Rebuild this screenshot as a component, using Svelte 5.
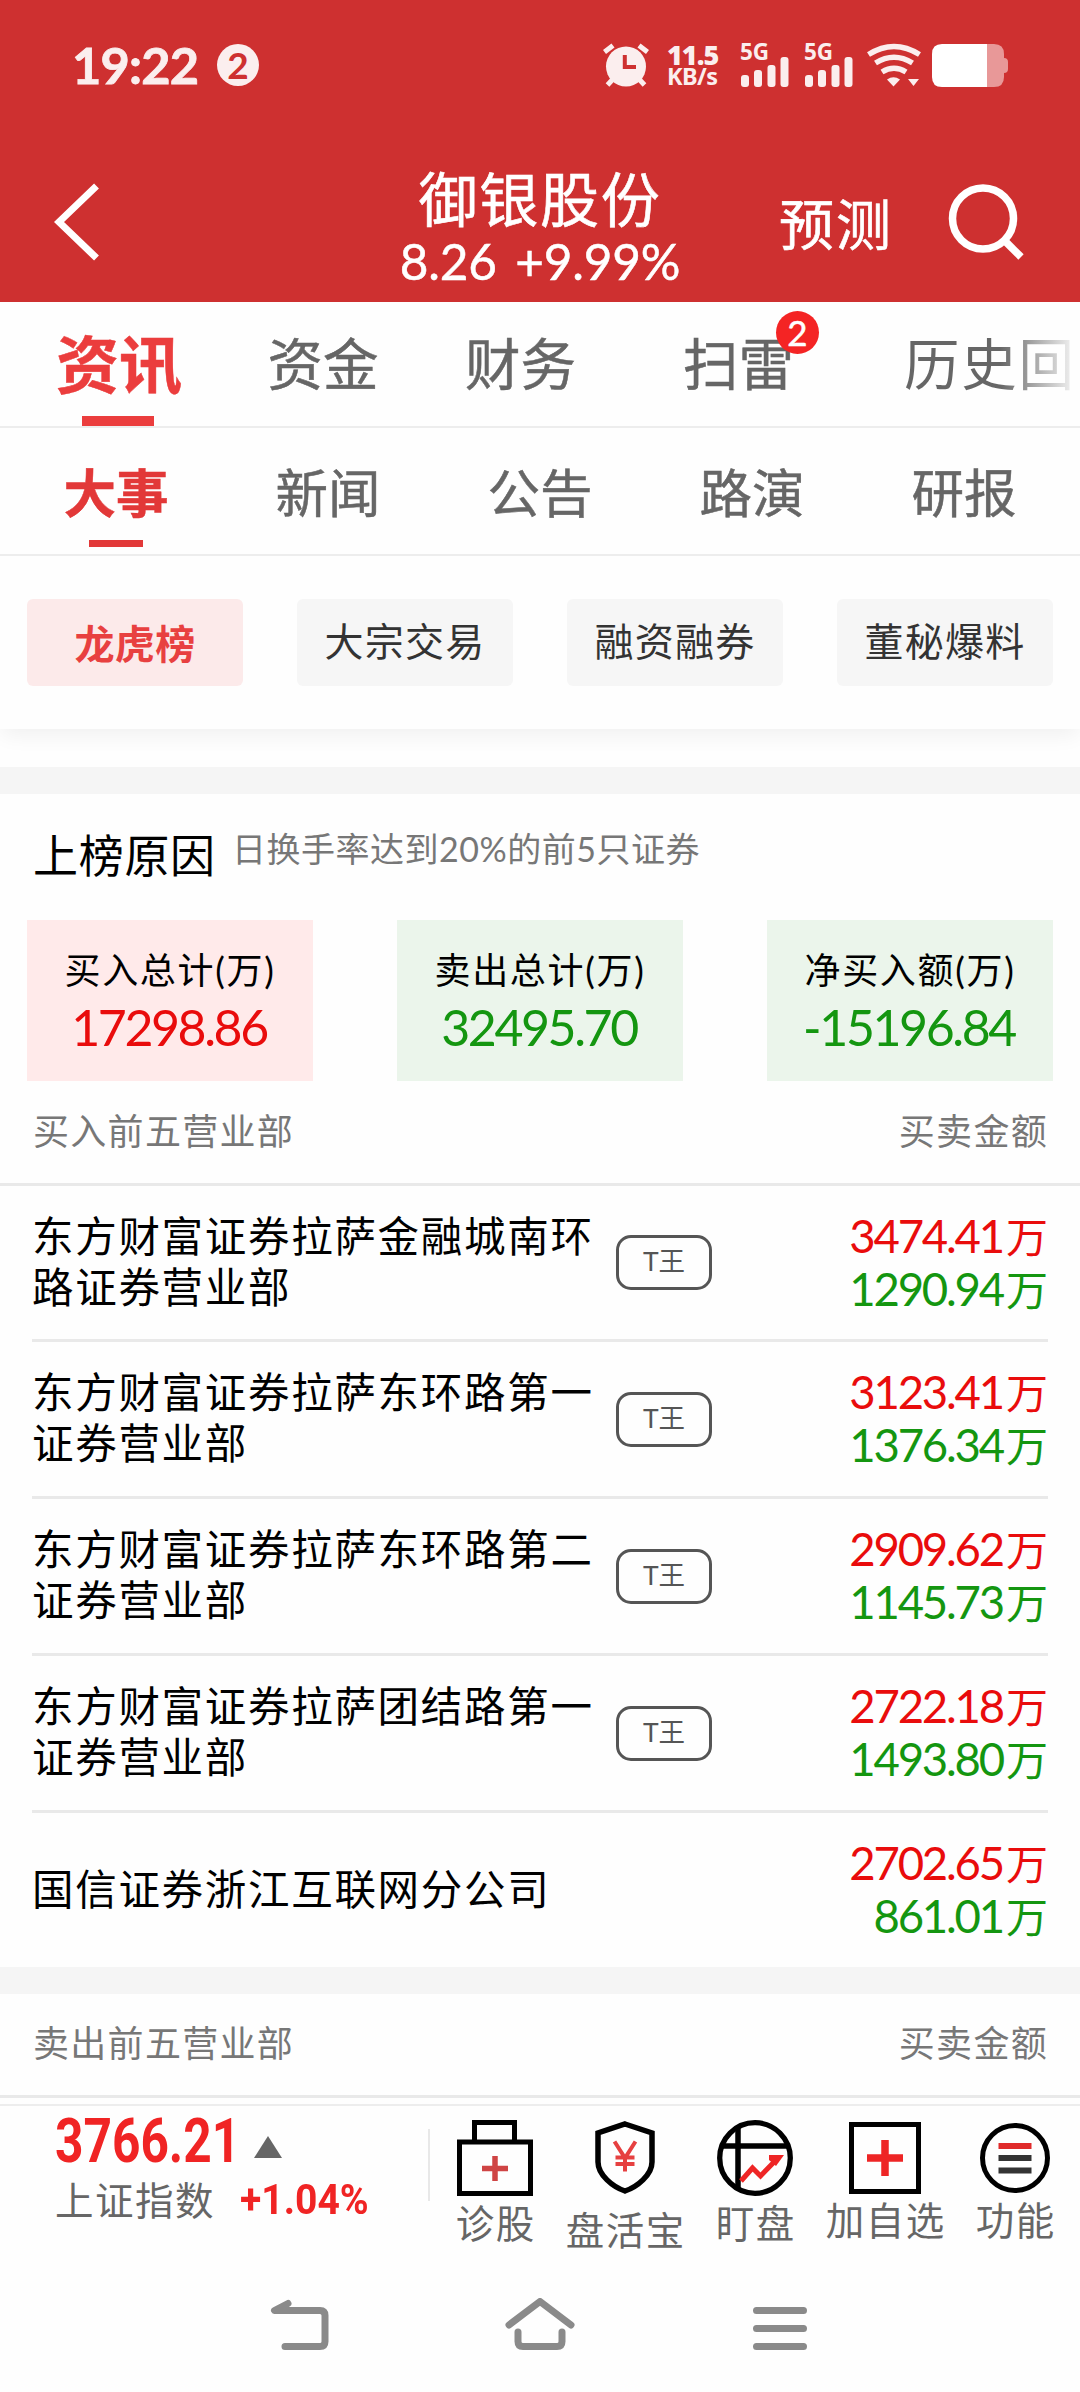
<script lang="ts">
	type Branch = { name: string; tag?: string; buy: string; sell: string };

	let activeTab = $state('资讯');
	let activeSub = $state('大事');
	let activeChip = $state('龙虎榜');

	const tabs: { label: string; badge?: number }[] = [
		{ label: '资讯' },
		{ label: '资金' },
		{ label: '财务' },
		{ label: '扫雷', badge: 2 },
		{ label: '历史回' }
	];
	const subTabs = ['大事', '新闻', '公告', '路演', '研报'];
	const chips = ['龙虎榜', '大宗交易', '融资融券', '董秘爆料'];

	const totals = [
		{ label: '买入总计(万)', value: '17298.86', up: true },
		{ label: '卖出总计(万)', value: '32495.70', up: false },
		{ label: '净买入额(万)', value: '-15196.84', up: false }
	];

	const branches: Branch[] = [
		{ name: '东方财富证券拉萨金融城南环路证券营业部', tag: 'T王', buy: '3474.41', sell: '1290.94' },
		{ name: '东方财富证券拉萨东环路第一证券营业部', tag: 'T王', buy: '3123.41', sell: '1376.34' },
		{ name: '东方财富证券拉萨东环路第二证券营业部', tag: 'T王', buy: '2909.62', sell: '1145.73' },
		{ name: '东方财富证券拉萨团结路第一证券营业部', tag: 'T王', buy: '2722.18', sell: '1493.80' },
		{ name: '国信证券浙江互联网分公司', buy: '2702.65', sell: '861.01' }
	];
</script>

{#snippet signal()}
	<div class="signal">
		<span>5G</span>
		<svg width="50" height="30" viewBox="0 0 50 30" fill="#fbeeee">
			<rect x="1" y="18" width="8" height="12" rx="3" />
			<rect x="14" y="13" width="8" height="17" rx="3" />
			<rect x="27.500" y="8" width="8" height="22" rx="3" />
			<rect x="40.500" y="0" width="8" height="30" rx="3" />
		</svg>
	</div>
{/snippet}

<div class="page">
	<header>
		<div class="status">
			<span class="time">19:22</span>
			<span class="count">2</span>
			<div class="status-icons">
				<svg class="alarm" width="46" height="44" viewBox="0 0 46 44">
					<g stroke="#fbeeee" stroke-width="5">
						<path d="M1.500 9 L10 2.500 M36 2.500 L44.500 9 M4.500 42 L11 35 M41.500 42 L35 35" />
					</g>
					<circle cx="23" cy="23.500" r="20" fill="#fbeeee" />
					<path d="M21.800 12 V24 H33" fill="none" stroke="#ce3030" stroke-width="4" />
				</svg>
				<div class="speed"><b>11.5</b><i>KB/s</i></div>
				{@render signal()}
				{@render signal()}
				<svg class="wifi" width="54" height="44" viewBox="0 0 54 44">
					<g fill="none" stroke="#fbeeee" stroke-width="5.500">
						<path d="M1.500 11.500 Q27 -4.500 52.500 11.500" />
						<path d="M8.500 20 Q27 8.500 45.500 20" />
						<path d="M15 29 Q27 21.500 39 29" />
					</g>
					<path d="M20 36.500 Q26.500 32 33 36.500 L26.500 43.500 Z" fill="#fbeeee" />
					<path d="M41 36 H52 L46.500 43 Z" fill="#fbeeee" />
				</svg>
				<svg class="battery" width="76" height="43" viewBox="0 0 76 43">
					<path d="M54 0 H62 Q72 0 72 10 V14 Q76 14 76 18 V25 Q76 29 72 29 V33 Q72 43 62 43 H54 Z" fill="#e89898" />
					<path d="M10 0 H55 V43 H10 Q0 43 0 33 V10 Q0 0 10 0 Z" fill="#fff" />
				</svg>
			</div>
		</div>
		<div class="title-bar">
			<svg class="back" width="46" height="78" viewBox="0 0 46 78">
				<path d="M42.500 3 L5 39 L42.500 75" fill="none" stroke="#fff" stroke-width="7" />
			</svg>
			<div class="stock">
				<h1>御银股份</h1>
				<p>8.26 +9.99%</p>
			</div>
			<span class="predict">预测</span>
			<svg class="search" width="78" height="78" viewBox="0 0 78 78" fill="none" stroke="#fff">
				<circle cx="36" cy="36.500" r="30.500" stroke-width="7.500" />
				<path d="M57 58 L74 75" stroke-width="7.500" />
			</svg>
		</div>
	</header>

	<nav class="tabs">
		{#each tabs as tab}
			<button class:active={activeTab === tab.label} onclick={() => (activeTab = tab.label)}>
				<span class="label">
					{tab.label}
					{#if tab.badge}<em>{tab.badge}</em>{/if}
				</span>
			</button>
		{/each}
	</nav>

	<nav class="sub-tabs">
		{#each subTabs as tab}
			<button class:active={activeSub === tab} onclick={() => (activeSub = tab)}>{tab}</button>
		{/each}
	</nav>

	<div class="chips">
		{#each chips as chip}
			<button class:active={activeChip === chip} onclick={() => (activeChip = chip)}>{chip}</button>
		{/each}
	</div>

	<div class="band first"></div>

	<section>
		<div class="reason">
			<h2>上榜原因</h2>
			<p>日换手率达到20%的前5只证券</p>
		</div>
		<div class="totals">
			{#each totals as total}
				<div class="total" class:up={total.up}>
					<span>{total.label}</span>
					<strong>{total.value}</strong>
				</div>
			{/each}
		</div>
		<div class="list-head buy"><span>买入前五营业部</span><span>买卖金额</span></div>
		<ul>
			{#each branches as branch}
				<li>
					<span class="name">{branch.name}</span>
					{#if branch.tag}<span class="tag">{branch.tag}</span>{/if}
					<span class="amounts">
						<span class="red">{branch.buy}<i>万</i></span>
						<span class="green">{branch.sell}<i>万</i></span>
					</span>
				</li>
			{/each}
		</ul>
	</section>

	<div class="band"></div>
	<div class="list-head sell"><span>卖出前五营业部</span><span>买卖金额</span></div>

	<footer>
		<div class="index">
			<div class="index-top">
				<span class="points"><b>3766.21</b></span>
				<svg width="28" height="22" viewBox="0 0 28 22"><path d="M14 0 L28 22 H0 Z" fill="#666" /></svg>
			</div>
			<div class="index-bottom">
				<span>上证指数</span>
				<span class="change"><b>+1.04%</b></span>
			</div>
		</div>
		<div class="divider"></div>
		<div class="actions">
			<div class="action">
				<svg width="76" height="76" viewBox="0 0 76 76" fill="none">
					<path d="M17.500 20 V2.500 H57.500 V20" stroke="#000" stroke-width="5" />
					<rect x="2.500" y="22" width="71" height="51.500" stroke="#000" stroke-width="5" />
					<path d="M38 36 V61 M25 48.500 H51" stroke="#cf4444" stroke-width="5.500" />
				</svg>
				<span>诊股</span>
			</div>
			<div class="action shield">
				<svg width="60" height="74" viewBox="0 0 60 74" fill="none">
					<path
						d="M30 4 L57 13 V42 C57 55 42 67 30 71 C18 67 3 55 3 42 V13 Z"
						stroke="#000"
						stroke-width="5.500"
					/>
					<path
						d="M19.500 21.500 L30 38 L40.500 21.500 M30 37 V51.500 M20.500 37.500 H39.500 M20.500 44 H39.500"
						stroke="#e64040"
						stroke-width="4"
					/>
				</svg>
				<span>盘活宝</span>
			</div>
			<div class="action">
				<svg width="76" height="76" viewBox="0 0 76 76" fill="none">
					<circle cx="38" cy="38" r="35.300" stroke="#000" stroke-width="5.300" />
					<path d="M21 7 V69 M6 26 H70" stroke="#000" stroke-width="5.500" />
					<path d="M24 61 L35.500 48 L43.500 56 L60 39" stroke="#ee2525" stroke-width="5" />
					<path d="M52 35 H67 L59 46 L52 40 Z" fill="#ee2525" />
				</svg>
				<span>盯盘</span>
			</div>
			<div class="action high">
				<svg width="72" height="72" viewBox="0 0 72 72" fill="none">
					<rect x="2.500" y="2.500" width="67" height="67" stroke="#000" stroke-width="5" />
					<path d="M36 18 V54 M18 36 H54" stroke="#ee2525" stroke-width="7.500" />
				</svg>
				<span>加自选</span>
			</div>
			<div class="action high">
				<svg width="72" height="72" viewBox="0 0 72 72" fill="none">
					<circle cx="36" cy="36" r="32.500" stroke="#000" stroke-width="5" />
					<path d="M19.500 24 H52.500" stroke="#e02a2a" stroke-width="6" />
					<path d="M19.500 36 H52.500 M19.500 48.500 H52.500" stroke="#333" stroke-width="6" />
				</svg>
				<span>功能</span>
			</div>
		</div>
	</footer>

	<div class="system-nav">
		<svg width="60" height="54" viewBox="0 0 60 54">
			<path d="M18 5.500 L4.500 12.500 H50 Q55 12.500 55 17.500 V43.500 Q55 48.500 50 48.500 H15" />
		</svg>
		<svg width="70" height="54" viewBox="0 0 70 54">
			<path d="M4 27 L35 3.500 L66 27 M13 34 V43.500 Q13 48.500 18 48.500 H52 Q57 48.500 57 43.500 V34" />
		</svg>
		<svg width="60" height="54" viewBox="0 0 60 54">
			<path d="M6.500 12.500 H53.500 M6.500 30.500 H53.500 M6.500 48.500 H53.500" />
		</svg>
	</div>
</div>

<style>
	:global(body) {
		margin: 0;
		background: #fefefe;
	}

	.page {
		width: 1080px;
		height: 2392px;
		overflow: hidden;
		background: #fefefe;
		font-family: Lato, 'Noto Sans CJK SC', sans-serif;
		color: #000;
	}

	h1,
	h2,
	p,
	ul {
		margin: 0;
		padding: 0;
		font-weight: 400;
	}

	button {
		padding: 0;
		border: none;
		background: none;
		font: inherit;
		color: inherit;
	}

	i,
	em {
		font-style: normal;
	}

	svg {
		display: block;
		flex: none;
	}

	header {
		height: 302px;
		background: #ce3030;
		color: #fff;
	}

	/* status bar */
	.status {
		display: flex;
		align-items: center;
		height: 130px;
		padding: 0 72px 0 72px;
		color: #fbeeee;
	}

	.time {
		width: 145px;
		font-size: 50.500px;
		font-weight: 700;
		line-height: 60px;
		letter-spacing: -0.8px;
		-webkit-text-stroke: 0.8px;
	}

	.count {
		width: 42px;
		height: 42px;
		border-radius: 50%;
		background: #fbeeee;
		color: #ce3030;
		font-size: 37px;
		font-weight: 700;
		line-height: 42px;
		text-align: center;
	}

	.status-icons {
		display: flex;
		align-items: center;
		height: 44px;
		margin-left: auto;
	}

	.speed {
		display: flex;
		flex-direction: column;
		width: 52px;
		margin: 0 21px 0 18px;
		font-family: 'Noto Sans', sans-serif;
		font-weight: 700;
	}

	.speed b {
		font-size: 27px;
		line-height: 23px;
		letter-spacing: -1px;
	}

	.speed i {
		font-size: 23.500px;
		line-height: 21px;
		letter-spacing: -0.6px;
	}

	.signal {
		display: flex;
		flex-direction: column;
		justify-content: space-between;
		width: 50px;
		height: 43px;
		margin-right: 14px;
	}

	.signal span {
		height: 13px;
		font-family: 'Noto Sans', sans-serif;
		font-size: 22.500px;
		font-weight: 700;
		line-height: 15px;
	}

	.wifi {
		margin: 0 11px 0 -1px;
	}

	.title-bar {
		display: grid;
		grid-template-columns: 54px 286px 400px 39px 168px 1fr;
		height: 172px;
	}

	.back {
		grid-column: 2;
		margin-top: 53px;
	}

	.stock {
		grid-column: 3;
		padding-top: 32px;
		text-align: center;
	}

	.stock h1 {
		font-size: 59px;
		line-height: 76px;
		letter-spacing: 1.800px;
		-webkit-text-stroke: 0.6px;
	}

	.stock p {
		font-size: 49.500px;
		line-height: 46px;
		letter-spacing: -0.2px;
		word-spacing: 6px;
		-webkit-text-stroke: 0.5px;
	}

	.predict {
		grid-column: 5;
		margin-top: 58px;
		font-size: 55px;
		line-height: 72px;
		letter-spacing: 2px;
		-webkit-text-stroke: 0.6px;
	}

	.search {
		grid-column: 6;
		margin-top: 52px;
	}

	/* primary and secondary tabs */
	.tabs {
		display: grid;
		grid-template-columns: 204px 204px 191px 245px 1fr;
		height: 124px;
		padding-left: 17px;
		border-bottom: 2px solid #ededed;
		color: #666;
		font-size: 55.500px;
		letter-spacing: 1px;
	}

	.tabs button {
		display: flex;
		flex-direction: column;
		align-items: center;
		justify-content: space-between;
		white-space: nowrap;
		-webkit-text-stroke: 0.5px;
	}

	.tabs button:last-child {
		align-items: flex-start;
		padding-left: 43px;
	}

	.label {
		position: relative;
		padding-top: 22px;
		line-height: 80px;
	}

	/* the last tab runs out of the row and fades away */
	.tabs button:last-child .label {
		background: linear-gradient(90deg, #666 96px, #fefefe 176px);
		background-clip: text;
		color: transparent;
		letter-spacing: 1.800px;
		-webkit-text-stroke: 0;
	}

	.tabs .active {
		color: #eb3d3d;
		font-size: 63px;
		font-weight: 700;
		letter-spacing: 0;
	}

	.tabs .active::after {
		content: '';
		width: 72px;
		height: 10px;
		margin-right: 3px;
		background: #eb3d3d;
	}

	.label em {
		position: absolute;
		top: 9px;
		right: -25px;
		width: 43px;
		height: 43px;
		border-radius: 50%;
		background: #f42424;
		color: #fff;
		font-size: 35px;
		line-height: 43px;
		letter-spacing: 0;
		text-align: center;
	}

	.sub-tabs {
		display: grid;
		grid-template-columns: repeat(5, 212px);
		height: 126px;
		padding: 0 10px;
		border-bottom: 2px solid #ededed;
		color: #666;
		font-size: 52.500px;
		letter-spacing: 1px;
	}

	.sub-tabs button {
		display: flex;
		flex-direction: column;
		align-items: center;
		justify-content: space-between;
		padding: 28px 0 7px;
		line-height: 74px;
		-webkit-text-stroke: 0.5px;
	}

	.sub-tabs .active {
		color: #e23838;
		font-weight: 700;
	}

	.sub-tabs .active::after {
		content: '';
		width: 54px;
		height: 7px;
		background: #e23838;
	}

	.chips {
		display: grid;
		grid-template-columns: repeat(4, 216px);
		gap: 54px;
		height: 87px;
		padding: 43px 27px;
		box-shadow: 0 8px 20px -2px rgba(0, 0, 0, 0.06);
		clip-path: inset(0 0 -40px 0);
	}

	.chips button {
		padding-bottom: 7px;
		border-radius: 6px;
		background: #f6f6f6;
		color: #333;
		font-size: 39px;
		letter-spacing: 1.300px;
	}

	.chips .active {
		padding-bottom: 2px;
		background: #fceaea;
		color: #e84040;
		font-size: 40px;
		font-weight: 700;
		letter-spacing: 0.3px;
	}

	.band {
		height: 27px;
		background: #f5f5f5;
	}

	.band.first {
		margin-top: 38px;
	}

	/* list reason and totals */
	.reason {
		display: flex;
		height: 126px;
		padding-left: 33px;
	}

	.reason h2 {
		width: 199px;
		padding-top: 28px;
		font-size: 45px;
		line-height: 68px;
		letter-spacing: 0.700px;
	}

	.reason p {
		padding-top: 31px;
		color: #777;
		font-size: 34px;
		line-height: 48px;
		letter-spacing: 0.5px;
	}

	.totals {
		display: flex;
		gap: 84px;
		padding: 0 27px;
	}

	.total {
		display: flex;
		flex-direction: column;
		align-items: center;
		width: 286px;
		height: 136px;
		padding-top: 25px;
		background: #ebf5eb;
	}

	.total span {
		font-size: 36px;
		line-height: 50px;
		letter-spacing: 1.700px;
	}

	.total strong {
		margin-right: 2px;
		color: #149610;
		font-size: 50px;
		font-weight: 400;
		line-height: 64px;
		letter-spacing: -2.400px;
	}

	.total.up {
		background: #ffeaea;
	}

	.total.up strong {
		color: #e90c0c;
	}

	.list-head {
		display: flex;
		justify-content: space-between;
		padding: 0 32px 0 33px;
		border-bottom: 3px solid #e9e9e9;
		color: #777;
		font-size: 36px;
		line-height: 101px;
		letter-spacing: 1.300px;
	}

	.buy {
		height: 102px;
	}

	.sell {
		height: 101px;
		line-height: 99px;
	}

	ul {
		padding: 0 32px;
		list-style: none;
	}

	li {
		display: flex;
		align-items: center;
		height: 154px;
		border-bottom: 3px solid #e9e9e9;
	}

	li:first-child {
		height: 153px;
	}

	li:last-child {
		border: none;
	}

	.name {
		width: 570px;
		padding-bottom: 2px;
		font-size: 41.500px;
		line-height: 51px;
		letter-spacing: 1.700px;
	}

	.tag {
		box-sizing: border-box;
		width: 96px;
		height: 55px;
		margin-left: 14px;
		border: 3px solid #555;
		border-radius: 15px;
		color: #555;
		font-size: 26.500px;
		line-height: 46px;
		text-align: center;
	}

	.amounts {
		display: flex;
		flex-direction: column;
		align-items: flex-end;
		margin-left: auto;
		font-size: 45.500px;
		line-height: 51px;
		letter-spacing: -2.200px;
	}

	.amounts i {
		margin-left: 3px;
		font-size: 42px;
		letter-spacing: 0;
	}

	.red {
		color: #e90c0c;
	}

	.green {
		color: #149610;
	}

	/* bottom toolbar */
	footer {
		display: flex;
		height: 160px;
		margin-top: 6px;
		border-top: 2px solid #ededed;
	}

	.index {
		width: 376px;
		padding-left: 55px;
	}

	.index-top {
		display: flex;
		align-items: center;
		height: 68px;
	}

	.points {
		width: 199px;
		padding-top: 3px;
	}

	.points b,
	.change b {
		display: block;
		color: #f02424;
		font-family: Roboto, sans-serif;
		font-size: 60.500px;
		line-height: 66px;
		transform: scaleX(0.82);
		transform-origin: left;
	}

	.index-top svg {
		margin-top: 13px;
	}

	.index-bottom {
		display: flex;
		color: #666;
		font-size: 38.500px;
		line-height: 52px;
		letter-spacing: 1.500px;
	}

	.change {
		margin-left: 25px;
	}

	.change b {
		font-size: 42px;
		line-height: 51px;
		letter-spacing: 0;
		transform: scaleX(0.93);
	}

	.divider {
		width: 2px;
		height: 72px;
		margin-top: 23px;
		background: #e8e8e8;
	}

	.actions {
		display: flex;
	}

	.action {
		display: flex;
		flex-direction: column;
		align-items: center;
		width: 130px;
		padding-top: 14px;
		color: #666;
		font-size: 38.500px;
		line-height: 54px;
		letter-spacing: 1.500px;
		white-space: nowrap;
	}

	.action span {
		margin-right: -1.500px;
	}

	.shield span {
		margin-top: 9px;
	}

	.high {
		padding-top: 16px;
	}

	.high span {
		margin-top: -1px;
	}

	.system-nav {
		display: flex;
		justify-content: center;
		gap: 175px;
		padding-top: 32px;
	}

	.system-nav svg {
		fill: none;
		stroke: #8a8a8a;
		stroke-width: 7;
		stroke-linecap: round;
		stroke-linejoin: round;
	}
</style>
